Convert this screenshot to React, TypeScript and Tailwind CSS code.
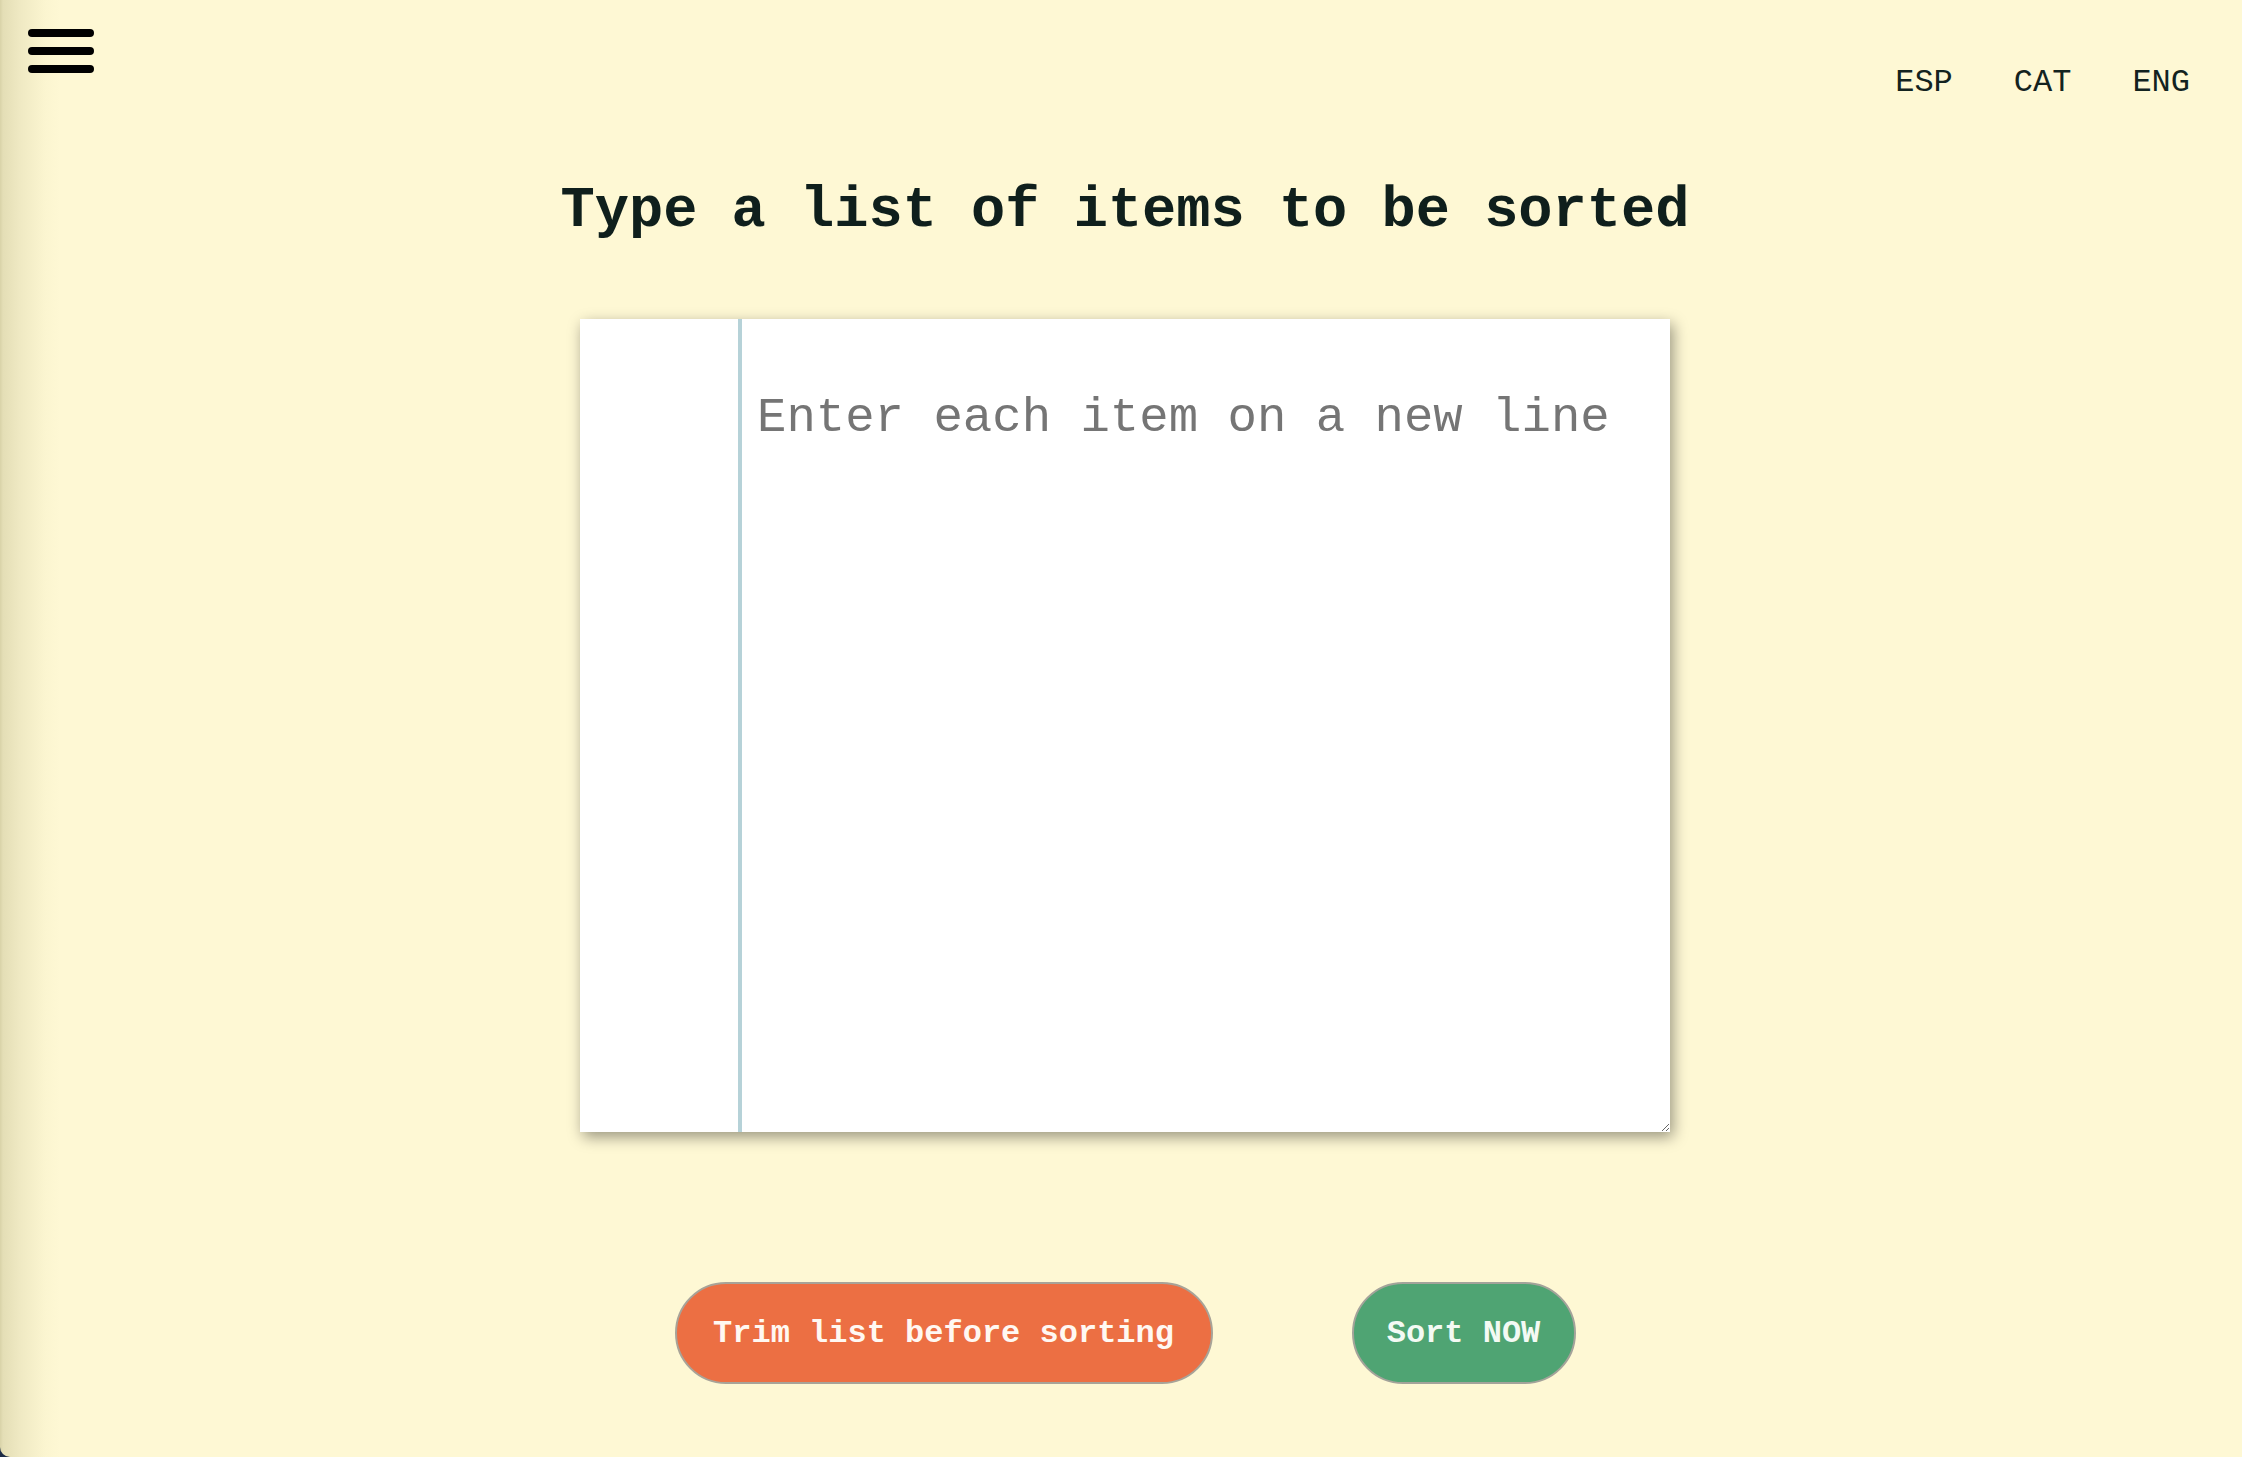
import React from 'react';

const mono = 'font-["Liberation_Mono","Courier_New",monospace]';

const languages = ['ESP', 'CAT', 'ENG'];

/**
 * Hamburger menu icon
 */
const MenuButton: React.FC = () => (
  <button className="flex flex-col gap-[10px] ml-[28px] mt-[29px]" aria-label="menu">
    <span className="block w-[66px] h-[8px] rounded-full bg-black" />
    <span className="block w-[66px] h-[8px] rounded-full bg-black" />
    <span className="block w-[66px] h-[8px] rounded-full bg-black" />
  </button>
);

export default function App() {
  return (
    <div className="w-full h-[1457px] bg-[#1c2a45]">
      <div
        className={`h-full rounded-bl-[10px] overflow-hidden bg-[linear-gradient(to_right,#d8d2a8_0px,#e4deb6_3px,#efe9c3_20px,#fbf5d0_45px,#fef8d4_60px)] ${mono}`}
      >
        {/* top bar */}
        <div className="h-[101px] flex items-start justify-between">
          <MenuButton />
          <nav className="flex gap-[61px] mt-[65px] mr-[52px]">
            {languages.map((lang) => (
              <a key={lang} className="text-[32px] leading-[36px] text-[#13231f] cursor-pointer">
                {lang}
              </a>
            ))}
          </nav>
        </div>

        <main className="flex flex-col items-center pl-[8px]">
          <h1 className="mt-[78px] text-[57px] leading-[64px] font-bold text-[#0f1f1c]">
            Type a list of items to be sorted
          </h1>

          {/* notebook-style textarea */}
          <div className="mt-[76px] w-[1090px] h-[813px] flex bg-white shadow-[3px_5px_14px_rgba(0,0,0,0.4)]">
            <div className="w-[158px] shrink-0" />
            <div className="w-[4px] shrink-0 bg-[#b6d2d8]" />
            <textarea
              placeholder="Enter each item on a new line"
              className={`flex-1 h-full pt-[71px] pl-[15px] pr-4 text-[49px] leading-[56px] text-[#222] placeholder:text-[#757575] outline-none bg-white ${mono}`}
            />
          </div>

          <div className="mt-[150px] flex gap-[139px]">
            <button className="w-[538px] h-[102px] pt-[2px] rounded-full border-2 border-[#a8a398] bg-[#ec6f43] text-[32px] font-bold text-[#fff8f2]">
              Trim list before sorting
            </button>
            <button className="w-[224px] h-[102px] pt-[2px] rounded-full border-2 border-[#a3a39a] bg-[#4fa473] text-[32px] font-bold text-[#f4faf4]">
              Sort NOW
            </button>
          </div>
        </main>
      </div>
    </div>
  );
}
